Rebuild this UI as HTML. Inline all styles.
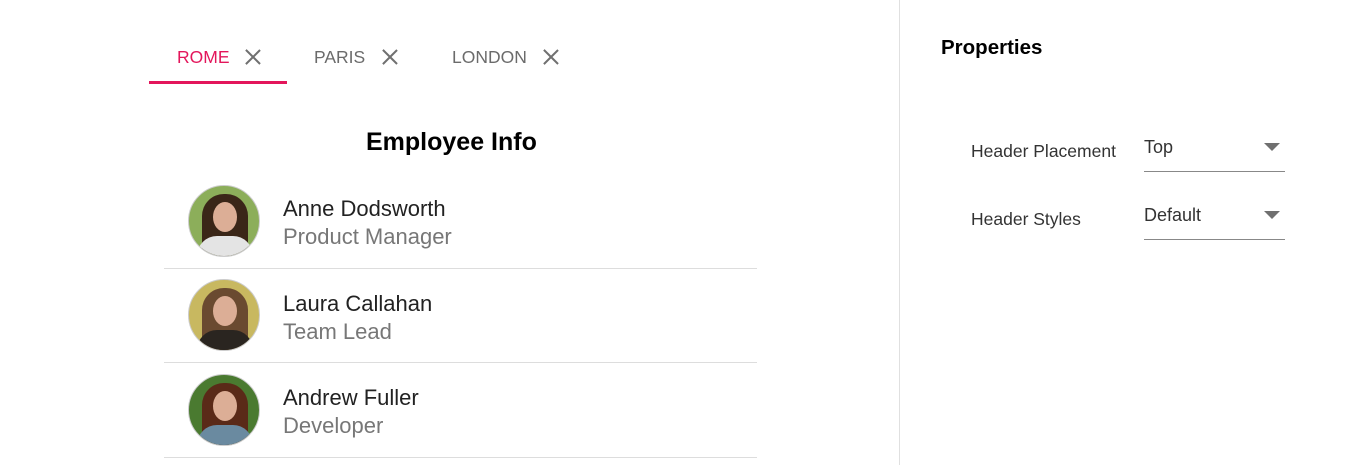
<!DOCTYPE html>
<html><head><meta charset="utf-8"><style>
*{margin:0;padding:0;box-sizing:border-box}
body{width:1360px;height:465px;background:#fff;font-family:"Liberation Sans",sans-serif;position:relative;overflow:hidden}
.a{position:absolute;white-space:nowrap}
.tab{font-size:17.5px;color:#6b6b6b;top:47px}
.x{position:absolute;top:49px;width:16px;height:16px}
.x:before,.x:after{content:"";position:absolute;left:7px;top:-2px;width:1.8px;height:20px;background:#707070;transform:rotate(45deg)}
.x:after{transform:rotate(-45deg)}
.av{position:absolute;left:188px;width:72px;height:72px;border-radius:50%;overflow:hidden;border:1px solid #ccc}
.face{position:absolute;left:24px;top:16px;width:24px;height:30px;border-radius:50%;background:#dcae96}
.hair{position:absolute;left:13px;top:8px;width:46px;height:64px;border-radius:22px 22px 6px 6px}
.body{position:absolute;left:8px;top:50px;width:56px;height:30px;border-radius:20px 20px 0 0}
.nm{font-size:22px;color:#222;left:283px}
.rl{font-size:22px;color:#777;left:283px}
.ln{position:absolute;left:164px;width:593px;height:1px;background:#ddd}
.lbl{font-size:17.5px;color:#333;left:971px}
.val{font-size:18px;color:#333;left:1144px}
.ul{position:absolute;left:1144px;width:141px;height:1px;background:#888}
.tri{position:absolute;left:1264px;width:0;height:0;border-left:8px solid transparent;border-right:8px solid transparent;border-top:8px solid #707070}
</style></head><body>
<div class="a tab" style="left:177px;color:#e3165b">ROME</div><div class="x" style="left:245px"></div>
<div class="a tab" style="left:314px">PARIS</div><div class="x" style="left:382px"></div>
<div class="a tab" style="left:452px">LONDON</div><div class="x" style="left:543px"></div>
<div class="a" style="left:149px;top:81px;width:138px;height:3px;background:#e3165b"></div>
<div class="a" style="left:366px;top:128px;font-size:25px;font-weight:bold;color:#000">Employee Info</div>

<div class="av" style="top:185px;background:#8cae5a"><div class="hair" style="background:#3a2618"></div><div class="body" style="background:#e4e4e4"></div><div class="face"></div></div>
<div class="a nm" style="top:196px">Anne Dodsworth</div>
<div class="a rl" style="top:224px">Product Manager</div>
<div class="ln" style="top:268px"></div>

<div class="av" style="top:279px;background:#c8b860"><div class="hair" style="background:#6a4a30"></div><div class="body" style="background:#2a2520"></div><div class="face"></div></div>
<div class="a nm" style="top:291px">Laura Callahan</div>
<div class="a rl" style="top:319px">Team Lead</div>
<div class="ln" style="top:362px"></div>

<div class="av" style="top:374px;background:#4a7a30"><div class="hair" style="background:#5a2a18"></div><div class="body" style="background:#6a8aa0"></div><div class="face"></div></div>
<div class="a nm" style="top:385px">Andrew Fuller</div>
<div class="a rl" style="top:413px">Developer</div>
<div class="ln" style="top:457px"></div>

<div class="a" style="left:899px;top:0;width:1px;height:465px;background:#e0e0e0"></div>
<div class="a" style="left:941px;top:36px;font-size:20.5px;font-weight:bold;color:#000">Properties</div>
<div class="a lbl" style="top:141px">Header Placement</div>
<div class="a val" style="top:137px">Top</div>
<div class="tri" style="top:143px"></div>
<div class="ul" style="top:171px"></div>
<div class="a lbl" style="top:209px">Header Styles</div>
<div class="a val" style="top:205px">Default</div>
<div class="tri" style="top:211px"></div>
<div class="ul" style="top:239px"></div>
</body></html>
